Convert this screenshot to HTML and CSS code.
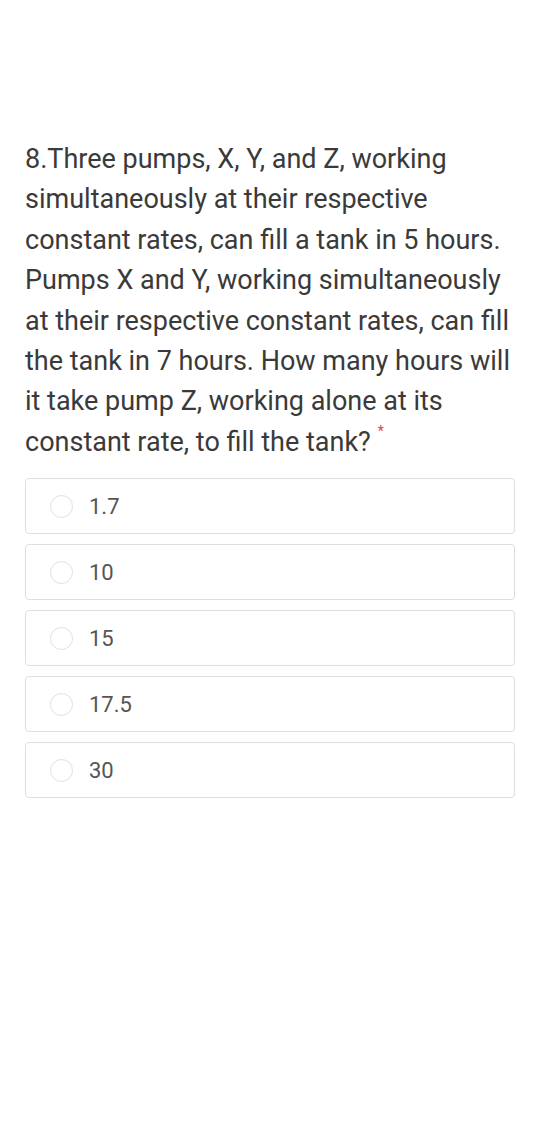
FILE: index.html
```html
<!DOCTYPE html>
<html>
<head>
<meta charset="utf-8">
<link rel="stylesheet" href="styles.css">
</head>
<body>
<div class="page">
  <div class="question">8.Three pumps, X, Y, and Z, working simultaneously at their respective constant rates, can fill a tank in 5 hours. Pumps X and Y, working simultaneously at their respective constant rates, can fill the tank in 7 hours. How many hours will it take pump Z, working alone at its constant rate, to fill the tank?<span class="req">*</span></div>
  <div class="options">
    <div class="option"><span class="radio"></span><span class="label">1.7</span></div>
    <div class="option"><span class="radio"></span><span class="label">10</span></div>
    <div class="option"><span class="radio"></span><span class="label">15</span></div>
    <div class="option"><span class="radio"></span><span class="label">17.5</span></div>
    <div class="option"><span class="radio"></span><span class="label">30</span></div>
  </div>
</div>
</body>
</html>
```

FILE: styles.css
```css
html, body {
  margin: 0;
  padding: 0;
  background: #ffffff;
}
.page {
  padding: 139px 25px 0 25px;
  font-family: Roboto, "Noto Sans", sans-serif;
}
.question {
  font-size: 27px;
  line-height: 40.4px;
  color: #3a3a3a;
}
.req {
  color: #db4437;
  font-size: 14px;
  line-height: 1;
  vertical-align: top;
  position: relative;
  top: 2px;
  margin-left: 7px;
}
.options {
  margin-top: 16px;
  display: flex;
  flex-direction: column;
  gap: 10px;
}
.option {
  height: 54px;
  border: 1px solid #dedede;
  border-radius: 4px;
  display: flex;
  align-items: center;
  padding-left: 24px;
}
.radio {
  width: 21px;
  height: 21px;
  border: 1.5px solid #e0e0e0;
  border-radius: 50%;
  flex: none;
}
.label {
  margin-left: 16px;
  font-size: 22px;
  color: #555555;
}
```
